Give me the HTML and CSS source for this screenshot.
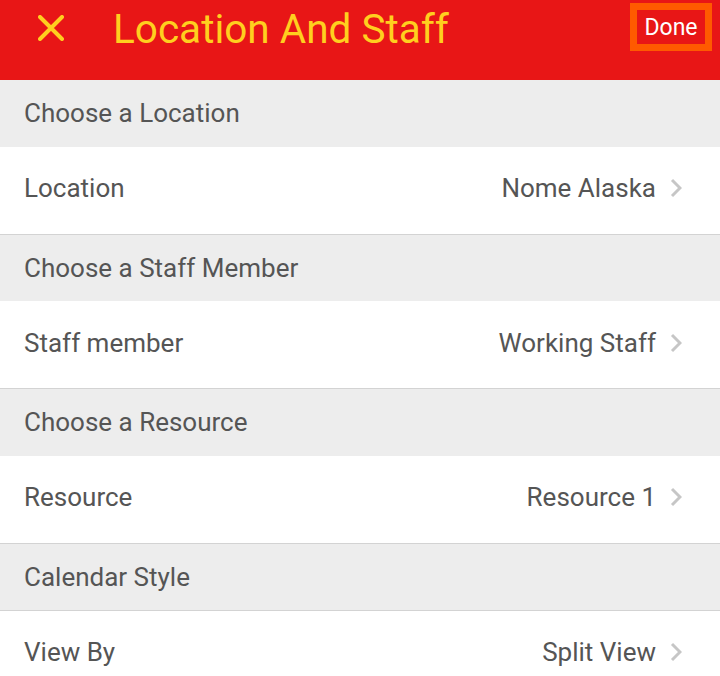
FILE: index.html
```html
<!DOCTYPE html>
<html lang="en">
<head>
    <meta charset="UTF-8">
    <meta name="viewport" content="width=device-width, initial-scale=1.0">
    <title>Location And Staff</title>
    <link rel="stylesheet" href="styles.css">
</head>
<body>

    <!-- TOP BAR -->
    <header class="top-bar">
        <svg class="close-icon" width="26" height="26" viewBox="0 0 26 26">
            <path d="M2 2 L24 24 M24 2 L2 24" stroke="#ffcf1f" stroke-width="4" stroke-linecap="round"/>
        </svg>
        <h1 class="title">Location And Staff</h1>
        <button class="done-btn">Done</button>
    </header>

    <div class="section-head">Choose a Location</div>
    <div class="row">
        <span class="row-label">Location</span>
        <span class="row-value">Nome Alaska</span>
        <svg class="chevron" width="12" height="20" viewBox="0 0 12 20"><path d="M2 2 L10 10 L2 18" fill="none" stroke="#c6c6c6" stroke-width="3"/></svg>
    </div>

    <div class="section-head">Choose a Staff Member</div>
    <div class="row">
        <span class="row-label">Staff member</span>
        <span class="row-value">Working Staff</span>
        <svg class="chevron" width="12" height="20" viewBox="0 0 12 20"><path d="M2 2 L10 10 L2 18" fill="none" stroke="#c6c6c6" stroke-width="3"/></svg>
    </div>

    <div class="section-head">Choose a Resource</div>
    <div class="row">
        <span class="row-label">Resource</span>
        <span class="row-value">Resource 1</span>
        <svg class="chevron" width="12" height="20" viewBox="0 0 12 20"><path d="M2 2 L10 10 L2 18" fill="none" stroke="#c6c6c6" stroke-width="3"/></svg>
    </div>

    <div class="section-head">Calendar Style</div>
    <div class="row row-last">
        <span class="row-label">View By</span>
        <span class="row-value">Split View</span>
        <svg class="chevron" width="12" height="20" viewBox="0 0 12 20"><path d="M2 2 L10 10 L2 18" fill="none" stroke="#c6c6c6" stroke-width="3"/></svg>
    </div>

</body>
</html>
```

FILE: styles.css
```css
/* --- General --- */
body {
    margin: 0;
    font-family: Roboto, 'Noto Sans', sans-serif;
    background-color: #fff;
    color: #555;
}

/* --- Top bar --- */
.top-bar {
    height: 80px;
    background-color: #e81616;
    display: flex;
    align-items: flex-start;
    box-sizing: border-box;
    padding: 0 8px 0 38px;
}
.close-icon {
    margin-top: 15px;
    flex-shrink: 0;
}
.title {
    margin: 2px 0 0 49px;
    font-size: 40.5px;
    font-weight: 400;
    color: #ffcf1f;
    line-height: 54px;
    flex: 1;
}
.done-btn {
    margin-top: 3px;
    width: 82px;
    height: 48px;
    border: 7px solid #ff5a00;
    background: transparent;
    color: #fff;
    font-family: Roboto, sans-serif;
    font-size: 23px;
    padding: 0;
}

/* --- List --- */
.section-head {
    height: 66.5px;
    background-color: #ededed;
    padding-left: 24px;
    display: flex;
    align-items: center;
    font-size: 26px;
}
.row {
    height: 88px;
    box-sizing: border-box;
    border-bottom: 1px solid #d3d3d3;
    display: flex;
    align-items: center;
    padding: 0 38px 4px 24px;
    font-size: 26px;
}
.row-last {
    border-top: 1px solid #d3d3d3;
}
.row-label {
    flex: 1;
}
.row-value {
    margin-right: 14px;
}
.chevron {
    flex-shrink: 0;
}
```
